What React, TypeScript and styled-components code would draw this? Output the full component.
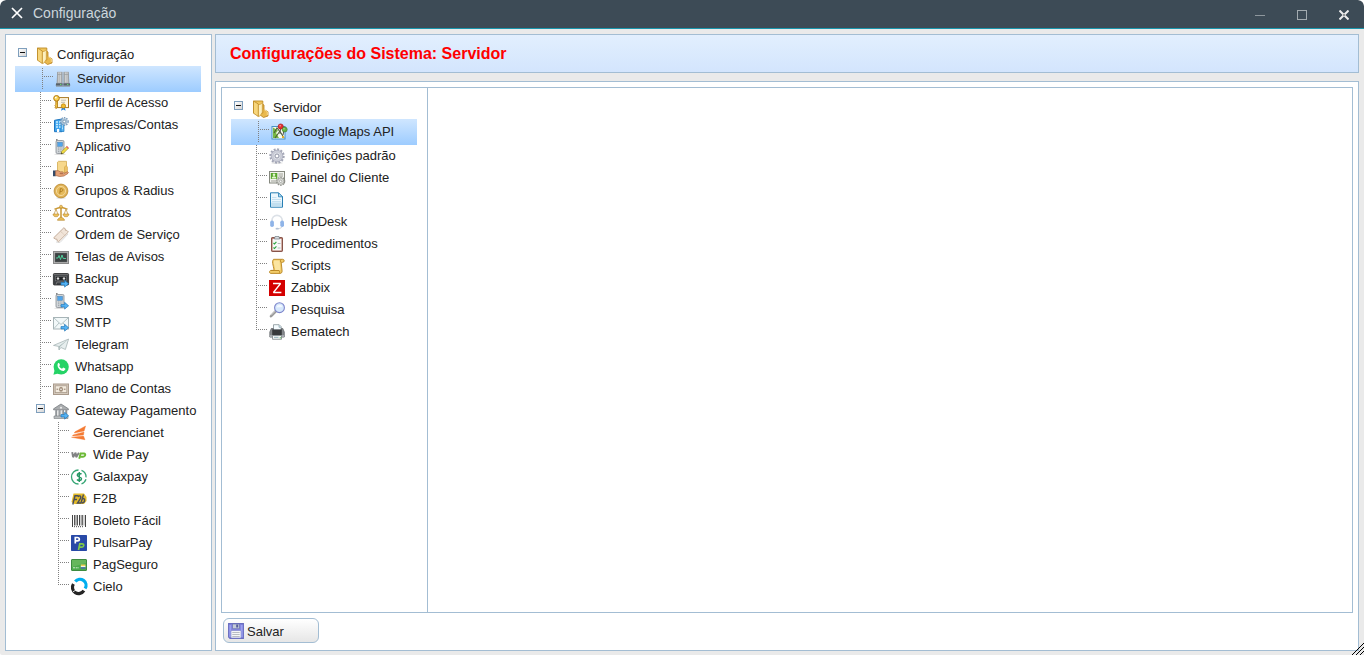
import React from "react";
import styled, { createGlobalStyle, css } from "styled-components";

const line = "#a3bdd3";

const GlobalStyle = createGlobalStyle`
  html, body { margin: 0; padding: 0; height: 100%; overflow: hidden; background: #fff; }
  body { font-family: "Liberation Sans", Arial, sans-serif; font-size: 13px; color: #222; }
  *, *::before, *::after { box-sizing: border-box; }
`;

const Window = styled.div`
  position: relative;
  display: flex;
  flex-direction: column;
  width: 100%;
  height: 100vh;
  background: #eaeaea;
  border-radius: 6px 6px 0 2px;
  overflow: hidden;
`;

const TitleBar = styled.header`
  display: flex;
  align-items: center;
  flex: none;
  height: 29px;
  padding: 0 15px 3px 11px;
  background: #3d4b56;
  border-bottom: 1px solid #1a96ac;
  color: #ccd6dc;
  border-radius: 6px 6px 0 0;
`;

const TitleText = styled.h1`
  flex: 1;
  margin: 0 0 0 10px;
  font-size: 14px;
  font-weight: normal;
  line-height: 16px;
`;

const WindowControls = styled.div`
  display: flex;
  gap: 32px;
  padding-top: 5px;
  svg { display: block; }
`;

const Workspace = styled.div`
  display: flex;
  flex: 1;
  min-height: 0;
  gap: 3px;
  padding: 5px 5px 4px;
`;

const Sidebar = styled.nav`
  flex: none;
  width: 207px;
  padding: 9px;
  background: #fff;
  border: 1px solid ${line};
`;

const Content = styled.div`
  display: flex;
  flex: 1;
  flex-direction: column;
  gap: 8px;
`;

const Heading = styled.div`
  display: flex;
  align-items: center;
  flex: none;
  height: 39px;
  padding: 0 14px;
  background: linear-gradient(#e2effe, #d3e5fd);
  border: 1px solid ${line};
  color: #ff0000;
  font-size: 16px;
  font-weight: bold;
`;

const Panel = styled.main`
  display: flex;
  flex: 1;
  flex-direction: column;
  gap: 5px;
  padding: 5px 5px 7px;
  background: #fff;
  border: 1px solid ${line};
`;

const Split = styled.div`
  display: flex;
  flex: 1;
  border: 1px solid ${line};
`;

const SplitNav = styled.nav`
  width: 206px;
  padding: 9px;
  border-right: 1px solid ${line};
`;

const SaveButton = styled.button`
  display: flex;
  align-items: center;
  gap: 3px;
  flex: none;
  width: 96px;
  height: 25px;
  margin: 0 0 0 2px;
  padding: 0 4px;
  border: 1px solid ${line};
  border-radius: 6px;
  background: linear-gradient(#fff, #e6e6e6);
  color: #222;
  font: 13px "Liberation Sans", Arial, sans-serif;
`;

const ButtonText = styled.span`
  padding-top: 2px;
`;

const ResizeGrip = styled.svg`
  position: absolute;
  right: 0;
  bottom: 0;
`;

const Row = styled.div<{ $level: number; $selected?: boolean }>`
  display: flex;
  width: 186px;
  height: ${(p) => (p.$selected ? 26 : 22)}px;
  padding: ${(p) => (p.$selected ? 2 : 0)}px;
  padding-left: ${(p) => p.$level * 18 + (p.$selected ? 2 : 0)}px;
  background: ${(p) => (p.$selected ? "linear-gradient(#cfe6ff, #9dccff)" : "none")};
`;

const dots = (dir: string) => css`repeating-linear-gradient(${dir}, #808080 0 1px, transparent 1px 2px)`;

const Guide = styled.span<{ $lines?: boolean; $last?: boolean }>`
  flex: none;
  width: 20px;
  padding: 4px 0 0 3px;
  ${(p) =>
    p.$lines &&
    css`
      background-image: ${dots("to bottom")}, ${dots("to right")};
      background-repeat: no-repeat;
      background-position: 7px 0, 9px 8px;
      background-size: 1px ${p.$last ? "9px" : "100%"}, 9px 1px;
    `}
`;

const Expander = styled.span`
  display: flex;
  align-items: center;
  justify-content: center;
  width: 9px;
  height: 9px;
  border: 1px solid #7f9fbd;
  background: linear-gradient(135deg, #fff, #d5d5d5);
  &::before { content: ""; width: 5px; height: 1px; background: #111; }
`;

const IconBox = styled.svg`
  display: block;
  flex: none;
  margin-top: 3px;
`;

const Label = styled.span`
  margin-left: 6px;
  line-height: 21px;
  white-space: nowrap;
`;

const Arrow = () => (
  <path d="M8 11.6h3.6V9.3l4 3.5-4 3.3v-2.2H8z" fill="#55b4f5" stroke="#1f75b8" strokeWidth=".7" />
);

const Phone = () => (
  <>
    <ellipse cx="7" cy="15.2" rx="6" ry=".8" fill="#ddd" />
    <rect x="3" y="0" width="1.6" height="4" fill="#888" />
    <rect x="3" y="1.5" width="8" height="13" rx="1.3" fill="#d0d5d9" stroke="#868d93" strokeWidth=".8" />
    <rect x="4.7" y="3.3" width="4.8" height="4" fill="#4fa5ec" stroke="#4c82b2" strokeWidth=".5" />
    <path d="M5 9h4.4M5 10.8h4.4M5 12.6h4.4" stroke="#90979c" strokeWidth=".8" strokeDasharray="1 .7" />
  </>
);

const icons: Record<string, React.ReactNode> = {
  folder: (
    <>
      <path d="M11.500 4l1.500 1v4.500l4 2.300v4.200l-4.500 1.500-4-3z" fill="#e9b94e" stroke="#b98220" strokeWidth=".8" />
      <path d="M13 9.500l3.300 2.200V15" fill="none" stroke="#fae099" strokeWidth=".9" />
      <path d="M2.500 1h9.300v12H2.500z" fill="#f0c65d" stroke="#bd8a25" strokeWidth=".9" />
      <path d="M7 4.500h2l2.300-1.700v9.400l-2.500 4H7z" fill="#fdf0bf" stroke="#cf9e3a" strokeWidth=".7" />
      <path d="M2.500 1l4.800 3v12.500L2.500 13.200z" fill="#f7d67c" stroke="#bd8a25" strokeWidth=".8" />
    </>
  ),
  server: (
    <>
      <path d="M2.300.8h5.200v12H1.700zM8.500.8h5.200l.6 12H8.500z" fill="#b3b5b7" />
      <path d="M2.600 1l-.4 11M6.900 1v11M9.100 1v11M13.300 1l.5 11" stroke="#94989b" strokeWidth=".7" />
      <path d="M3.800 1.500v10M5.500 1.500v10M10.500 1.500v10M12 1.500v10" stroke="#cfd1d2" strokeWidth=".9" />
      <path d="M2.500 3.500h4.700M8.800 3.500h4.700" stroke="#999da0" strokeWidth=".7" />
      <path d="M1 12.200h6.700v2.500H.8zM8.300 12.200H15l.2 2.500H8.300z" fill="#596268" />
      <path d="M5 13.500h1.400M12 13.500h1.400" stroke="#63d76b" />
      <path d="M1 15.200h14" stroke="#8c959c" />
    </>
  ),
  profile: (
    <>
      <rect x="3.5" y="2.6" width="12" height="10" fill="#fff8e5" stroke="#a87823" strokeWidth="1" />
      <path d="M8 5.2h5M8 7.3h4" stroke="#b3afa5" strokeWidth=".8" />
      <path d="M9.200 11.500l-1.200 4.200 2.400-1.200 2.200 1.200-1-4.200z" fill="#2888e5" />
      <circle cx="10.400" cy="11" r="2.200" fill="#f2bd2b" stroke="#b37c0e" strokeWidth=".7" />
      <path d="M4.5 5.5v6.8l-1.6 1.3-1-1.5.9-.8-.9-1 .9-.9V5z" fill="#f4c743" stroke="#ad7510" strokeWidth=".8" />
      <circle cx="3.500" cy="3.300" r="2.800" fill="#f8d052" stroke="#b27a13" />
      <circle cx="2.800" cy="2.600" r=".9" fill="#fff" />
    </>
  ),
  company: (
    <>
      <path d="M1.5 3.3L9 2v12.7H1.5z" fill="#41a4ee" stroke="#2178c1" />
      <path d="M3 5h5M3 7.5h5M3 10h5" stroke="#c8edff" strokeWidth="1.3" strokeDasharray="2 1" />
      <path d="M4 12h2.2v3H4z" fill="#fff" />
      <path d="M8 6.500h3v8H8z" fill="#58b6f3" stroke="#207bc1" strokeWidth=".7" />
      <path d="M9.500 8v5" stroke="#d3efff" strokeDasharray="1.4 1" />
      <circle cx="11.300" cy="4.500" r="3.300" fill="#a8c0d5" />
      <circle cx="11.300" cy="4.500" r="3.900" fill="none" stroke="#7799ba" strokeWidth="1.200" strokeDasharray="1.500 1" />
      <circle cx="11.300" cy="4.500" r="1.300" fill="#fff" stroke="#6284a3" strokeWidth=".6" />
    </>
  ),
  app: (
    <>
      <Phone />
      <path d="M8 15l.7-2.5 5-5 1.8 1.7-5 5z" fill="#f1dd46" stroke="#9d8c20" strokeWidth=".6" />
      <path d="M13 8l1-.9 1.800 1.700-1 .9z" fill="#e8626a" />
      <path d="M8 15l.5-1.700 1.200 1.100z" fill="#333" />
    </>
  ),
  api: (
    <>
      <path d="M4.500 1.200l1-.9h8v11h-9z" fill="#f7d88c" stroke="#d2ab52" strokeWidth=".8" />
      <path d="M11.500 6l1.500-1.500 1.500 1.500v7h-3z" fill="#edc266" stroke="#c99b3d" strokeWidth=".5" />
      <path d="M0 9.500h2.800v5.700H0z" fill="#344b69" />
      <path d="M2.700 9.700h2.500l2 1.200h2.300c1.100.2 1 1.700-.1 1.700H6.800l3.500.2 3.800-1.900c1.200-.4 1.700.8.7 1.500L11 15l-4.400.5-4-1z" fill="#e6a277" stroke="#a96743" strokeWidth=".7" />
    </>
  ),
  coin: (
    <>
      <ellipse cx="8" cy="15" rx="5" ry=".7" fill="#ddd" />
      <circle cx="8" cy="8" r="6.900" fill="#dfb257" stroke="#ba8930" strokeWidth=".8" />
      <circle cx="8" cy="8" r="4.600" fill="#e5ba5c" stroke="#f7dfaa" strokeWidth=".8" />
      <path d="M6.800 10.700l.5-5h1.200c2 0 1.800 2.700-.2 2.700H7.200" fill="none" stroke="#a97518" strokeWidth=".9" />
    </>
  ),
  scales: (
    <>
      <path d="M8 1v12M1.5 4c2-.2 3-1.2 4.7-1.2h3.600c1.700 0 2.700 1 4.700 1.200" fill="none" stroke="#c99733" strokeWidth="1.500" />
      <circle cx="8" cy="1.700" r="1.500" fill="#eec45e" stroke="#b07b20" strokeWidth=".5" />
      <path d="M3 4L1 9.500M3 4l2 5.500M13 4l-2 5.500M13 4l2 5.500" stroke="#c79c4b" strokeWidth=".8" />
      <path d="M0 9h6c-.3 2.200-1.400 2.700-3 2.700S.2 11.200 0 9zM10 9h6c-.3 2.200-1.400 2.700-3 2.700s-2.800-.5-3-2.700z" fill="#eec25d" stroke="#b98933" strokeWidth=".6" />
      <path d="M4.500 15.300c0-1.700 1.800-2 2.600-3h1.800c.8 1 2.600 1.300 2.600 3z" fill="#eabd53" stroke="#b48328" strokeWidth=".6" />
    </>
  ),
  ticket: (
    <>
      <path d="M3 15l4 .5 8-8.500" stroke="#dcdcdc" strokeWidth="1" fill="none" />
      <path d="M.7 10.800L10.800.8l1.500 1 .1 1.500 1.500.1 1.500 1.600-9.800 9.700-1.500-1-.2-1.500-1.700-.2z" fill="#f1e4d8" stroke="#bda591" strokeWidth=".9" />
      <path d="M7.700 4.300l4.200 4.200" stroke="#cbb4a0" strokeWidth=".9" strokeDasharray="1 .7" />
    </>
  ),
  monitor: (
    <>
      <rect x=".5" y="2.500" width="15" height="12" fill="#bdbdbd" stroke="#888" />
      <rect x="2" y="4" width="12" height="9" fill="#3d4243" stroke="#666" strokeWidth=".5" />
      <path d="M3 9h2l1-2.500 1.500 4L9 6l1.200 3.500H13" fill="none" stroke="#51d8a1" strokeWidth=".9" />
    </>
  ),
  tape: (
    <>
      <rect x=".4" y="2.500" width="15.200" height="11.500" rx="1" fill="#3d4044" stroke="#292929" strokeWidth=".8" />
      <path d="M1 3.700h14" stroke="#777" />
      <rect x="2.500" y="5.500" width="11" height="4.300" fill="#222527" stroke="#777" strokeWidth=".6" />
      <circle cx="5" cy="7.600" r="1.100" fill="#fff" stroke="#999" strokeWidth=".6" />
      <circle cx="11" cy="7.600" r="1.100" fill="#fff" stroke="#999" strokeWidth=".6" />
      <path d="M3 13.500l1-2.500h7" stroke="#777" fill="none" />
      <Arrow />
    </>
  ),
  sms: (
    <>
      <Phone />
      <Arrow />
    </>
  ),
  mail: (
    <>
      <rect x=".5" y="2.500" width="15" height="11.500" fill="#f2f8f9" stroke="#a7b4b7" />
      <path d="M1 3l7 6.500L15 3M1 13.500l5-5.500M15 13.500l-5-5.500" fill="none" stroke="#afbec1" strokeWidth=".9" />
      <Arrow />
    </>
  ),
  plane: (
    <>
      <path d="M.5 8.400L15.600 2l-3.200 10.500-4.500-2L6 13l-.3-3.600z" fill="#e7eeee" stroke="#9eacad" strokeWidth=".7" />
      <path d="M15.500 2L5.700 9.400 6 13l1-3.200z" fill="#a8b9b9" />
    </>
  ),
  whatsapp: (
    <>
      <circle cx="8.200" cy="7.800" r="7.600" fill="#25d366" />
      <path d="M.4 15.700l1.300-4.700 3.500 3.500z" fill="#25d366" />
      <path d="M5 4.200c.6-.5 1.200-.3 1.500.5l.5 1.200-.8 1.300c.6 1.200 1.600 2 2.800 2.500l1.200-1.100 2 1c.7.400-.3 2-1.400 2.300-3.600.5-7.700-4.200-5.800-7.700z" fill="#fff" />
    </>
  ),
  money: (
    <>
      <rect x=".5" y="3" width="15" height="10.500" fill="#d5cabd" stroke="#a99a8b" />
      <rect x="2.200" y="4.800" width="11.600" height="6.800" fill="#f3ebdf" stroke="#a99a8b" strokeWidth=".8" />
      <ellipse cx="8" cy="8.200" rx="2" ry="2.500" fill="#a08d7a" />
      <circle cx="8" cy="8.200" r=".8" fill="#fff" />
      <path d="M3.500 8.200h1.700M10.800 8.200h1.700" stroke="#8d7967" />
    </>
  ),
  bank: (
    <>
      <path d="M.6 5.800L8 1l7.400 4.800v1H.6z" fill="#aaadaf" stroke="#767b7f" strokeWidth=".8" />
      <circle cx="8" cy="4.700" r="1" fill="#f0f0f0" />
      <path d="M3 7v6M6.300 7v6M9.700 7v6M13 7v6" stroke="#a9adb0" strokeWidth="2" />
      <path d="M3.800 7v6M7.100 7v6M10.500 7v6M13.800 7v6" stroke="#70777b" strokeWidth=".6" />
      <path d="M1 13h14v2.500H1z" fill="#b9bdbf" stroke="#777c80" strokeWidth=".6" />
      <Arrow />
    </>
  ),
  gerencianet: (
    <path d="M4 6.800L14.600 1l-1.500 5L3.300 8zM2 10l11-3-.5 2.900-11 1zM.5 12.300l12-1.300 1.500 3.700z" fill="#f47a32" stroke="#f47a32" strokeWidth=".4" />
  ),
  widepay: (
    <>
      <path d="M1.200 5.200l.9 5 2.500-4.500.6 4.500 2.700-4.500" fill="none" stroke="#828384" strokeWidth="1.900" strokeLinejoin="bevel" />
      <path d="M8.200 11.700l1.400-5.200h3.300c2.300.3 1.500 3.300-1 3.200H8" fill="none" stroke="#6cb936" strokeWidth="1.900" />
    </>
  ),
  galaxpay: (
    <>
      <path d="M7.500 1A7 7 0 0 0 7.500 15M10.500 1.400a7 7 0 0 1 4.500 7M15 10.300a7 7 0 0 1-4.500 4.500" fill="none" stroke="#37a675" strokeWidth="1.300" />
      <path d="M10.500 5.200C9.200 3.800 6.200 4.300 6.300 6.200c.1 2 4.200 1.400 4.200 3.600 0 2.100-3.200 2.300-4.500.7M8.300 3v10" fill="none" stroke="#269764" strokeWidth="1.500" />
    </>
  ),
  f2b: (
    <>
      <path d="M2.500 2.500h10.500L15.500 6v4L13 13H3.500L.5 11z" fill="#e3bb29" />
      <path d="M1.800 13.500L4 4.800h3.500M3 8.500h3M7.200 6c1.500-2.500 3.600-.5 2 1.900L6.500 12H10L12.500 3.500M11.500 7.800c2.800-1.300 3 4-.5 4.200" fill="none" stroke="#4a4e59" strokeWidth="1.400" />
    </>
  ),
  barcode: (
    <>
      <path d="M1.500 2v12M14.500 2v12M8.500 2v10.500" stroke="#444" />
      <path d="M3.700 2v10.500M6.300 2v10.500M11.200 2v10.500" stroke="#444" strokeWidth="1.200" />
      <path d="M5 2v10.500M9.900 2v10.500M13 2v10.500" stroke="#777" strokeWidth=".6" />
      <path d="M3 13.700h10" stroke="#444" strokeDasharray="1 1" />
    </>
  ),
  pulsar: (
    <>
      <rect width="16" height="16" rx=".7" fill="#2849a7" />
      <path d="M4.300 8.500V2.500h2c2.700 0 2.700 3.300 0 3.300h-2" fill="none" stroke="#fff" strokeWidth="1.700" />
      <path d="M7.500 15L8.800 8.800h2.500c2.500.3 1.500 3.500-1 3.400H8" fill="none" stroke="#7fc94a" strokeWidth="1.700" />
    </>
  ),
  card: (
    <>
      <rect x=".5" y="2.500" width="15" height="11" rx=".5" fill="#4dab4c" stroke="#3e8b40" />
      <path d="M1 3h14v3L1 10z" fill="#70bc64" opacity=".7" />
      <path d="M2 10.800h6" stroke="#dff5da" strokeWidth=".9" strokeDasharray="2 .7" />
      <path d="M9.800 7.500h4.700v1.600H9.800z" fill="#f0d05c" />
      <path d="M9.800 9h4.700v1.300H9.800z" fill="#f1f5e7" />
      <path d="M9.800 10.300h4.700v1.500H9.800z" fill="#466cae" />
    </>
  ),
  cielo: (
    <>
      <path d="M4.300 2.600A6 6 0 0 1 14.100 9.500" fill="none" stroke="#00aeef" strokeWidth="3.200" />
      <path d="M2.400 5a6 6 0 0 0 10.500 6.700" fill="none" stroke="#252525" strokeWidth="3.200" />
      <path d="M2 12.800l3-1.800" stroke="#fff" strokeWidth=".8" />
    </>
  ),
  maps: (
    <>
      <rect x="1" y="2.500" width="13" height="12.500" fill="#f8faed" stroke="#4792c5" />
      <path d="M2 3.500l5 3-2 2.500 3 5H2z" fill="#77b944" />
      <path d="M3 9l3-5 4 5 3 5M4 14l5-7" fill="none" stroke="#4c5e35" strokeWidth="1.100" />
      <path d="M9.500 4l-.5 6M13 6l-1 5" stroke="#555" />
      <path d="M11 12h2v2h-2z" fill="#e3ad2c" />
      <circle cx="9.700" cy="2.500" r="2.600" fill="#e3302e" stroke="#a70f18" strokeWidth=".6" />
      <circle cx="13.700" cy="5.500" r="2.500" fill="#66b345" stroke="#397c23" strokeWidth=".6" />
      <path d="M8.500 1.800h1.300M12.500 4.800h1" stroke="#fff" strokeWidth=".8" />
    </>
  ),
  gear: (
    <>
      <ellipse cx="8" cy="15" rx="6" ry=".8" fill="#ddd" />
      <circle cx="8" cy="8" r="6.700" fill="none" stroke="#a3a6b6" strokeWidth="2" strokeDasharray="2 1.500" />
      <circle cx="8" cy="8" r="5.800" fill="#cbcdd8" stroke="#a4a7b7" strokeWidth=".8" />
      <circle cx="8" cy="8" r="3.900" fill="#dfe1e8" stroke="#b5b8c5" strokeWidth=".5" />
      <circle cx="8" cy="8" r="2" fill="#fff" stroke="#9093a5" />
    </>
  ),
  clientpanel: (
    <>
      <rect x=".5" y="1.500" width="15" height="11.500" fill="#f2f3ef" stroke="#85887e" />
      <rect x="1.800" y="3" width="6.500" height="6" fill="#58a52b" />
      <circle cx="5" cy="4.800" r="1.300" fill="#e3f6d1" />
      <path d="M2.700 8.500c0-3 4.600-3 4.600 0" fill="#e3f6d1" />
      <path d="M9.500 4h4.500M9.500 6h4.500M2 11h6" stroke="#969890" strokeWidth=".9" />
      <circle cx="11.700" cy="11.300" r="3.900" fill="none" stroke="#8d8f89" strokeWidth="1.400" strokeDasharray="1.500 1" />
      <circle cx="11.700" cy="11.300" r="3.100" fill="#dedfdb" stroke="#9c9e98" strokeWidth=".7" />
      <circle cx="11.700" cy="11.300" r="1.200" fill="#fff" stroke="#858781" strokeWidth=".6" />
    </>
  ),
  document: (
    <>
      <path d="M1.500.8h8l4 4v10.400h-12z" fill="#ecf7fd" stroke="#287fb4" />
      <path d="M9.500.8v4h4z" fill="#b9dff4" stroke="#287fb4" strokeWidth=".8" />
      <path d="M3 5.500h4.500M3 7.500h9M3 9.500h9" stroke="#c4e0f0" strokeWidth="1.200" />
      <path d="M2.200 10.500h10.600v4H2.200z" fill="#c2dfef" />
    </>
  ),
  headset: (
    <>
      <path d="M3 8V6.300C3 3.500 5.200 1.300 8 1.300s5.200 2.200 5.200 5V8" fill="none" stroke="#dce1e7" strokeWidth="1.700" />
      <path d="M13.800 10.500c0 3-2 4-5 4.200" fill="none" stroke="#cfd5dc" />
      <rect x="1.200" y="6.500" width="3.700" height="6.500" rx="1.800" fill="#8fb4e8" />
      <rect x="11.300" y="6.500" width="3.700" height="6.500" rx="1.800" fill="#8fb4e8" />
      <ellipse cx="8.200" cy="14.700" rx="1.700" ry=".9" fill="#b5c3d6" />
    </>
  ),
  clipboard: (
    <>
      <rect x="2.500" y="1.500" width="11" height="14" rx=".7" fill="#b06c5d" stroke="#7e483e" strokeWidth=".9" />
      <path d="M3.500 2.800h9v11.700h-9z" fill="#f6f8f9" />
      <path d="M6 .5h4l.6 2.500H5.400z" fill="#d9dee2" stroke="#727d84" strokeWidth=".7" />
      <path d="M4.500 7l1 1 1.900-2.200M4.500 11.500l1 1 1.900-2.200" fill="none" stroke="#29a23b" strokeWidth="1.100" />
      <path d="M8.700 7.500h2.800M8.700 12h2.800" stroke="#b5b8ba" />
    </>
  ),
  script: (
    <>
      <path d="M4.500 1.300h9.200c2 0 2 3 0 3h-1.500L13 12c.5 3-1 3.400-2 3.400H1.800c-2-.2-1.500-3 .2-3h2.700c1-2-2.800-8.500-.2-11.100z" fill="#f2cc69" stroke="#b78320" strokeWidth=".9" />
      <path d="M5 2.500h6c-.8 3 .6 7 .3 9.500H6.100C6.500 9 4 6 5 2.500z" fill="#fbe5a0" />
      <path d="M2 12.500h8c.8.500.5 2 .8 2.700M12 4.300c-1-.5-.8-2 0-2.700" fill="none" stroke="#b78320" strokeWidth=".9" />
    </>
  ),
  zabbix: (
    <>
      <rect width="16" height="16" fill="#d40000" />
      <path d="M4 3.500h7.600L4.400 12.500h8" fill="none" stroke="#fff" strokeWidth="1.300" strokeLinejoin="bevel" />
    </>
  ),
  search: (
    <>
      <path d="M7 9L2 14.200" stroke="#999" strokeWidth="2.600" strokeLinecap="round" />
      <path d="M6.600 8.700L2 13.300" stroke="#ddd" strokeWidth=".8" />
      <circle cx="10.500" cy="5.700" r="4.900" fill="#d6e8fc" stroke="#7d85cb" strokeWidth="1.100" />
      <path d="M7.400 5.500a3.200 3.200 0 0 1 6.200-.5" fill="#f3f8ff" />
    </>
  ),
  printer: (
    <>
      <path d="M4.500 6V.7h5.700l2 2V6z" fill="#f5fcff" stroke="#849197" strokeWidth=".8" />
      <path d="M10 1v2.300h2" fill="#c9ebf4" stroke="#849197" strokeWidth=".6" />
      <path d="M2.300 4.500h2v2h8v-2h1.500l1.500 3.500v5H.8V8z" fill="#85898c" stroke="#5c6064" strokeWidth=".7" />
      <path d="M3.200 5.500h9.600v5.500H3.200z" fill="#36393c" />
      <path d="M1 11h14v2.500H1z" fill="#a5abaf" />
      <path d="M3.500 11.500h9v3.800h-9z" fill="#f2f5f6" stroke="#70787d" strokeWidth=".7" />
      <path d="M5 13.300h4.500" stroke="#8caeb8" />
      <path d="M10.700 13.800h1.500" stroke="#5dbb51" />
    </>
  ),
  save: (
    <>
      <path d="M.6.600h14.800v14.800H2L.6 14z" fill="#8588e2" stroke="#696dc0" strokeWidth="1.100" />
      <path d="M1.500 2h1.500v12H1.500zM13 2h1.500v12H13z" fill="#9da1ef" />
      <path d="M4.500 1h7v4.700h-7z" fill="#c5ccd8" stroke="#6870ad" strokeWidth=".7" />
      <path d="M8.200 1.600h2v3h-2z" fill="#555c9d" />
      <path d="M3 7.500h10V15H3z" fill="#f5f6f8" stroke="#7a80c7" strokeWidth=".6" />
      <path d="M4.300 9.500h7.400M4.300 11.500h7.400M4.300 13.500h7.400" stroke="#b1b5bc" strokeWidth=".9" />
    </>
  ),
};

const Icon = ({ name }: { name: string }) => (
  <IconBox width="16" height="16" viewBox="0 0 16 16" overflow="visible" aria-hidden="true">
    {icons[name]}
  </IconBox>
);

const ButtonIcon = styled.svg`
  flex: none;
`;

type Node = { label: string; icon: string; selected?: boolean; children?: Node[] };

const TreeNode = ({ node, level = 0, last = false }: { node: Node; level?: number; last?: boolean }) => (
  <>
    <Row $level={level} $selected={node.selected}>
      <Guide $lines={!node.children} $last={last}>
        {node.children && <Expander />}
      </Guide>
      <Icon name={node.icon} />
      <Label>{node.label}</Label>
    </Row>
    {node.children?.map((child, i) => (
      <TreeNode key={child.label} node={child} level={level + 1} last={i === node.children!.length - 1} />
    ))}
  </>
);

const settingsTree: Node = {
  label: "Configuração",
  icon: "folder",
  children: [
    { label: "Servidor", icon: "server", selected: true },
    { label: "Perfil de Acesso", icon: "profile" },
    { label: "Empresas/Contas", icon: "company" },
    { label: "Aplicativo", icon: "app" },
    { label: "Api", icon: "api" },
    { label: "Grupos & Radius", icon: "coin" },
    { label: "Contratos", icon: "scales" },
    { label: "Ordem de Serviço", icon: "ticket" },
    { label: "Telas de Avisos", icon: "monitor" },
    { label: "Backup", icon: "tape" },
    { label: "SMS", icon: "sms" },
    { label: "SMTP", icon: "mail" },
    { label: "Telegram", icon: "plane" },
    { label: "Whatsapp", icon: "whatsapp" },
    { label: "Plano de Contas", icon: "money" },
    {
      label: "Gateway Pagamento",
      icon: "bank",
      children: [
        { label: "Gerencianet", icon: "gerencianet" },
        { label: "Wide Pay", icon: "widepay" },
        { label: "Galaxpay", icon: "galaxpay" },
        { label: "F2B", icon: "f2b" },
        { label: "Boleto Fácil", icon: "barcode" },
        { label: "PulsarPay", icon: "pulsar" },
        { label: "PagSeguro", icon: "card" },
        { label: "Cielo", icon: "cielo" },
      ],
    },
  ],
};

const serverTree: Node = {
  label: "Servidor",
  icon: "folder",
  children: [
    { label: "Google Maps API", icon: "maps", selected: true },
    { label: "Definições padrão", icon: "gear" },
    { label: "Painel do Cliente", icon: "clientpanel" },
    { label: "SICI", icon: "document" },
    { label: "HelpDesk", icon: "headset" },
    { label: "Procedimentos", icon: "clipboard" },
    { label: "Scripts", icon: "script" },
    { label: "Zabbix", icon: "zabbix" },
    { label: "Pesquisa", icon: "search" },
    { label: "Bematech", icon: "printer" },
  ],
};

export default function App() {
  return (
    <>
      <GlobalStyle />
      <Window>
        <TitleBar>
          <svg width="12" height="12" viewBox="0 0 12 12">
            <path d="M1 1l10 10M11 1L1 11" stroke="#fff" strokeWidth="1.700" />
          </svg>
          <TitleText>Configuração</TitleText>
          <WindowControls>
            <svg width="10" height="10"><path d="M0 5.500h10" stroke="#8e979d" /></svg>
            <svg width="10" height="10"><rect x=".5" y=".5" width="9" height="9" fill="none" stroke="#a3abb0" /></svg>
            <svg width="10" height="10">
              <path d="M.5.500l9 9M9.500.500l-9 9" stroke="#eee" strokeWidth="2" />
              <path d="M4 4h2v2H4z" fill="#999" />
            </svg>
          </WindowControls>
        </TitleBar>
        <Workspace>
          <Sidebar>
            <TreeNode node={settingsTree} />
          </Sidebar>
          <Content>
            <Heading>Configurações do Sistema: Servidor</Heading>
            <Panel>
              <Split>
                <SplitNav>
                  <TreeNode node={serverTree} />
                </SplitNav>
              </Split>
              <SaveButton>
                <ButtonIcon width="16" height="16" viewBox="0 0 16 16">{icons.save}</ButtonIcon>
                <ButtonText>Salvar</ButtonText>
              </SaveButton>
            </Panel>
          </Content>
        </Workspace>
        <ResizeGrip width="12" height="12" shapeRendering="crispEdges">
          <path d="M0 12L12 0M4 12l8-8M8 12l4-4" stroke="#000" strokeWidth="1" />
        </ResizeGrip>
      </Window>
    </>
  );
}
